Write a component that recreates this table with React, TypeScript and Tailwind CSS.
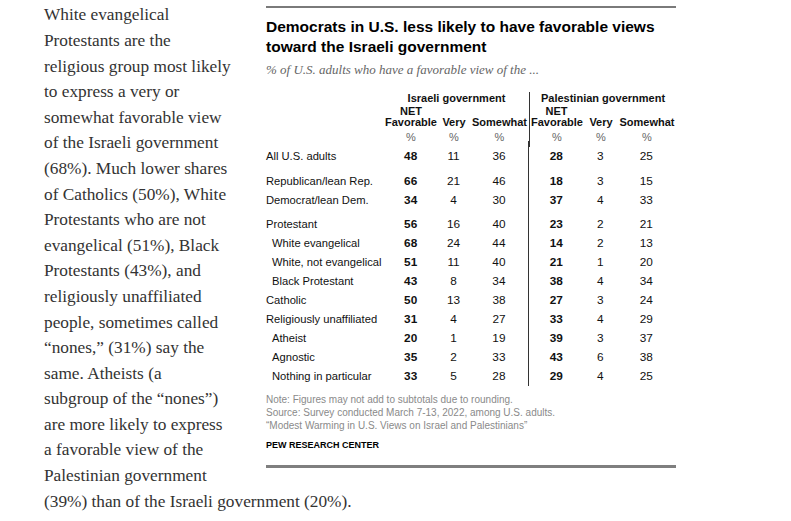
const rows = [
  { label: "All U.S. adults", sub: false, rowCls: "h-[19px]", v: [48, 11, 36, 28, 3, 25] },
  { label: "Republican/lean Rep.", sub: false, rowCls: "h-[25px] pt-[6px]", v: [66, 21, 46, 18, 3, 15] },
  { label: "Democrat/lean Dem.", sub: false, rowCls: "h-[19px]", v: [34, 4, 30, 37, 4, 33] },
  { label: "Protestant", sub: false, rowCls: "h-[24px] pt-[5px]", v: [56, 16, 40, 23, 2, 21] },
  { label: "White evangelical", sub: true, rowCls: "h-[19px]", v: [68, 24, 44, 14, 2, 13] },
  { label: "White, not evangelical", sub: true, rowCls: "h-[19px]", v: [51, 11, 40, 21, 1, 20] },
  { label: "Black Protestant", sub: true, rowCls: "h-[19px]", v: [43, 8, 34, 38, 4, 34] },
  { label: "Catholic", sub: false, rowCls: "h-[19px]", v: [50, 13, 38, 27, 3, 24] },
  { label: "Religiously unaffiliated", sub: false, rowCls: "h-[19px]", v: [31, 4, 27, 33, 4, 29] },
  { label: "Atheist", sub: true, rowCls: "h-[19px]", v: [20, 1, 19, 39, 3, 37] },
  { label: "Agnostic", sub: true, rowCls: "h-[19px]", v: [35, 2, 33, 43, 6, 38] },
  { label: "Nothing in particular", sub: true, rowCls: "h-[19px]", v: [33, 5, 28, 29, 4, 25] },
];

const lines = [
  "White evangelical",
  "Protestants are the",
  "religious group most likely",
  "to express a very or",
  "somewhat favorable view",
  "of the Israeli government",
  "(68%). Much lower shares",
  "of Catholics (50%), White",
  "Protestants who are not",
  "evangelical (51%), Black",
  "Protestants (43%), and",
  "religiously unaffiliated",
  "people, sometimes called",
  "“nones,” (31%) say the",
  "same. Atheists (a",
  "subgroup of the “nones”)",
  "are more likely to express",
  "a favorable view of the",
  "Palestinian government",
];

const Chart = () => {
  return (
    <div className="float-right w-[410px] ml-[20px] mt-[4px] border-t-2 border-[#7a7a7a] font-['Liberation_Sans',Arial,sans-serif] text-[#111]">
      <h2 className="mt-[9px] text-[15.5px] leading-[20px] font-bold text-black">
        Democrats in U.S. less likely to have favorable views toward the Israeli government
      </h2>
      <p className="mt-[5px] text-[13px] leading-[16px] italic text-[#666] font-['Liberation_Serif',Georgia,serif]">
        % of U.S. adults who have a favorable view of the ...
      </p>

      <div className="mt-[8.5px] text-[11px]">
        {/* header */}
        <div className="flex h-[18px] pt-[5px] leading-[13px] font-bold">
          <div className="w-[118px]"></div>
          <div className="w-[145px] text-center">Israeli government</div>
          <div className="w-[147px] border-l border-[#333] text-center">Palestinian government</div>
        </div>
        <div className="flex h-[12px] leading-[12px] font-bold">
          <div className="w-[118px]"></div>
          <div className="w-[54px] text-center">NET</div>
          <div className="w-[91px]"></div>
          <div className="w-[54px] border-l border-[#333] text-center">NET</div>
          <div className="w-[93px]"></div>
        </div>
        <div className="flex h-[11px] leading-[11px] font-bold">
          <div className="w-[118px]"></div>
          <div className="w-[54px] text-center">Favorable</div>
          <div className="w-[32px] text-center">Very</div>
          <div className="w-[59px] text-center whitespace-nowrap">Somewhat</div>
          <div className="w-[147px] flex border-l border-[#333]">
            <div className="w-[54px] text-center">Favorable</div>
            <div className="w-[34px] text-center">Very</div>
            <div className="w-[58px] text-center">Somewhat</div>
          </div>
        </div>
        <div className="flex h-[19px] items-center text-[#666] text-[11px]">
          <div className="w-[118px]"></div>
          <div className="w-[54px] text-center">%</div>
          <div className="w-[32px] text-center">%</div>
          <div className="w-[59px] text-center">%</div>
          <div className="w-[147px] h-full flex items-center border-l border-[#333]">
            <div className="w-[54px] text-center">%</div>
            <div className="w-[34px] text-center">%</div>
            <div className="w-[58px] text-center">%</div>
          </div>
        </div>

        {/* rows */}
        {rows.map((r) => (
          <div key={r.label} className={`flex ${r.rowCls}`}>
            <div className={`w-[118px] flex items-center whitespace-nowrap text-[11.2px] ${r.sub ? "pl-[6px]" : ""}`}>
              {r.label}
            </div>
            <div className="w-[54px] flex items-center justify-center font-bold text-[11.8px]">{r.v[0]}</div>
            <div className="w-[32px] flex items-center justify-center text-[11.8px]">{r.v[1]}</div>
            <div className="w-[59px] flex items-center justify-center text-[11.8px]">{r.v[2]}</div>
            <div className="w-[147px] flex border-l border-[#333] -mt-[6px] pt-[6px] box-content text-[11.8px]">
              <div className="w-[54px] flex items-center justify-center font-bold">{r.v[3]}</div>
              <div className="w-[34px] flex items-center justify-center">{r.v[4]}</div>
              <div className="w-[58px] flex items-center justify-center">{r.v[5]}</div>
            </div>
          </div>
        ))}
      </div>

      <div className="mt-[7px] text-[10px] leading-[13px] text-[#8a8a8a]">
        <p>Note: Figures may not add to subtotals due to rounding.</p>
        <p>Source: Survey conducted March 7-13, 2022, among U.S. adults.</p>
        <p>“Modest Warming in U.S. Views on Israel and Palestinians”</p>
      </div>
      <p className="mt-[7.5px] text-[9px] leading-[12px] font-bold text-black">PEW RESEARCH CENTER</p>
      <div className="mt-[14px] border-b-[3px] border-[#7f7f7f]"></div>
    </div>
  );
};

export default function App() {
  return (
    <div className="w-[791px] h-[521px] bg-white overflow-hidden">
      <div className="ml-[44px] w-[632px] pt-[2.4px] font-['Liberation_Serif',Georgia,serif] text-[17.3px] leading-[25.6px] text-[#333]">
        <Chart />
        {lines.map((l) => (
          <span key={l}>
            {l}
            <br />
          </span>
        ))}
        <span>(39%) than of the Israeli government (20%).</span>
      </div>
    </div>
  );
}
